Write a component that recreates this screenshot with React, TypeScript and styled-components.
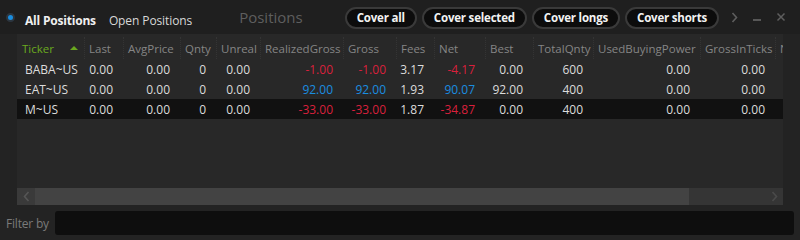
import React from "react";
import styled, { createGlobalStyle } from "styled-components";

const GlobalStyle = createGlobalStyle`
  html, body { margin: 0; padding: 0; background: #232323; }
  body { font-family: "Open Sans", "Noto Sans", sans-serif; }
  * { box-sizing: border-box; }
`;

const COLS = "67px 39px 57px 36px 44px 83px 53px 38px 51px 48px 60px 107px 75px 110px";

const Panel = styled.div`
  width: 800px;
  height: 240px;
  display: flex;
  flex-direction: column;
  background: #232323;
  overflow: hidden;
`;

const TopBar = styled.div`
  height: 34px;
  display: flex;
  align-items: center;
  background: #1f1f1f;
  padding-left: 6px;
  white-space: nowrap;
`;

const Radio = styled.span`
  flex-shrink: 0;
  width: 9px;
  height: 9px;
  border-radius: 50%;
  background: #1a8ee0;
  border: 2px solid #2c3640;
  margin-right: 10px;
  margin-top: 0px;
`;

const Tab = styled.span<{ $active?: boolean }>`
  flex-shrink: 0;
  font-size: 12px;
  font-weight: ${(p) => (p.$active ? 700 : 400)};
  color: ${(p) => (p.$active ? "#f0f0f0" : "#d8d8d8")};
  margin-right: ${(p) => (p.$active ? 13 : 0)}px;
  margin-top: 7px;
  letter-spacing: ${(p) => (p.$active ? "-0.2px" : "-0.1px")};
`;

const Title = styled.span`
  flex-shrink: 0;
  font-size: 15px;
  color: #5e5e5e;
  margin-left: 47px;
  margin-right: 42px;
`;

const Buttons = styled.div`
  display: flex;
  gap: 5px;
  flex-shrink: 0;
  margin-top: 1px;
`;

const PillButton = styled.button`
  flex-shrink: 0;
  white-space: nowrap;
  height: 22px;
  padding: 0 10px;
  border-radius: 11px;
  background: #0c0c0c;
  border: 2px solid #3a3a3a;
  color: #f2f2f2;
  font-family: inherit;
  font-size: 11.5px;
  font-weight: 700;
  letter-spacing: -0.2px;
  line-height: 1;
`;

const WinControls = styled.div`
  flex-shrink: 0;
  display: flex;
  align-items: center;
  gap: 14px;
  margin-left: 12px;
  color: #5e5e5e;
`;

const TableArea = styled.div`
  flex: 1;
  margin: 0 17px;
  background: #282828;
  overflow: hidden;
  padding-top: 3px;
`;

const HeaderRow = styled.div`
  display: grid;
  grid-template-columns: ${COLS};
  height: 22px;
  width: max-content;
`;

const HeadCell = styled.div<{ $first?: boolean; $sorted?: boolean }>`
  position: relative;
  display: flex;
  align-items: center;
  padding-left: ${(p) => (p.$first ? 5 : 4)}px;
  font-size: 11.5px;
  color: ${(p) => (p.$sorted ? "#6aa81f" : "#858585")};
  white-space: nowrap;
  overflow: hidden;
  border-left: ${(p) => (p.$first ? "none" : "1px dotted #343434")};
`;

const SortArrow = styled.span`
  position: absolute;
  right: 6px;
  top: 9px;
  width: 0;
  height: 0;
  border-left: 4px solid transparent;
  border-right: 4px solid transparent;
  border-bottom: 4px solid #6aa81f;
`;

const Row = styled.div<{ $selected?: boolean }>`
  display: grid;
  grid-template-columns: ${COLS};
  height: 20px;
  width: max-content;
  min-width: 100%;
  background: ${(p) => (p.$selected ? "#111111" : "transparent")};
`;

const Cell = styled.div<{ $left?: boolean; $tone?: "red" | "blue" }>`
  display: flex;
  align-items: center;
  justify-content: ${(p) => (p.$left ? "flex-start" : "flex-end")};
  padding: ${(p) => (p.$left ? "0 0 0 8px" : "0 10px 0 0")};
  font-size: 12px;
  color: ${(p) => (p.$tone === "red" ? "#d9203c" : p.$tone === "blue" ? "#1a8ee0" : "#dcdcdc")};
  white-space: nowrap;
`;

const ScrollBar = styled.div`
  height: 17px;
  margin: 0 17px;
  display: flex;
  background: #353535;
`;

const ScrollBtn = styled.div<{ $dim?: boolean }>`
  width: 18px;
  display: flex;
  align-items: center;
  justify-content: center;
  background: ${(p) => (p.$dim ? "transparent" : "#3a3a3a")};
  color: ${(p) => (p.$dim ? "#4a4a4a" : "#555555")};
`;

const Thumb = styled.div`
  width: 654px;
  background: #434343;
`;

const Spacer = styled.div`
  flex: 1;
`;

const FilterRow = styled.div`
  height: 35px;
  display: flex;
  align-items: center;
  padding: 1px 6px 0 6px;
  gap: 6px;
`;

const FilterLabel = styled.span`
  font-size: 12px;
  color: #7a7a7a;
  letter-spacing: -0.2px;
`;

const FilterInput = styled.div`
  flex: 1;
  height: 24px;
  background: #0e0e0e;
  border-radius: 3px;
`;

const Chevron = ({ dir }: { dir: "left" | "right" }) => (
  <svg width="7" height="11" viewBox="0 0 7 11">
    <path
      d={dir === "left" ? "M5.5 1 L1.5 5.5 L5.5 10" : "M1.5 1 L5.5 5.5 L1.5 10"}
      fill="none"
      stroke="currentColor"
      strokeWidth="1.6"
    />
  </svg>
);

const headers = [
  "Ticker",
  "Last",
  "AvgPrice",
  "Qnty",
  "Unreal",
  "RealizedGross",
  "Gross",
  "Fees",
  "Net",
  "Best",
  "TotalQnty",
  "UsedBuyingPower",
  "GrossInTicks",
  "NetInTicks",
];

type Tone = "red" | "blue" | undefined;
type RowData = { cells: string[]; tones: Tone[]; selected?: boolean };

const rows: RowData[] = [
  {
    cells: ["BABA~US", "0.00", "0.00", "0", "0.00", "-1.00", "-1.00", "3.17", "-4.17", "0.00", "600", "0.00", "0.00", ""],
    tones: [, , , , , "red", "red", , "red"],
  },
  {
    cells: ["EAT~US", "0.00", "0.00", "0", "0.00", "92.00", "92.00", "1.93", "90.07", "92.00", "400", "0.00", "0.00", ""],
    tones: [, , , , , "blue", "blue", , "blue"],
  },
  {
    cells: ["M~US", "0.00", "0.00", "0", "0.00", "-33.00", "-33.00", "1.87", "-34.87", "0.00", "400", "0.00", "0.00", ""],
    tones: [, , , , , "red", "red", , "red"],
    selected: true,
  },
];

export default function App() {
  return (
    <>
      <GlobalStyle />
      <Panel>
        <TopBar>
          <Radio />
          <Tab $active>All Positions</Tab>
          <Tab>Open Positions</Tab>
          <Title>Positions</Title>
          <Buttons>
            <PillButton>Cover all</PillButton>
            <PillButton>Cover selected</PillButton>
            <PillButton>Cover longs</PillButton>
            <PillButton>Cover shorts</PillButton>
          </Buttons>
          <WinControls>
            <Chevron dir="right" />
            <svg width="10" height="10" viewBox="0 0 10 10">
              <path d="M1 8 H9" stroke="currentColor" strokeWidth="1.8" />
            </svg>
            <svg width="10" height="10" viewBox="0 0 10 10">
              <path d="M1.5 1.5 L8.5 8.5 M8.5 1.5 L1.5 8.5" stroke="currentColor" strokeWidth="1.5" />
            </svg>
          </WinControls>
        </TopBar>
        <TableArea>
          <HeaderRow>
            {headers.map((h, i) => (
              <HeadCell key={h} $first={i === 0} $sorted={i === 0}>
                {h}
                {i === 0 && <SortArrow />}
              </HeadCell>
            ))}
          </HeaderRow>
          {rows.map((r) => (
            <Row key={r.cells[0]} $selected={r.selected}>
              {r.cells.map((c, i) => (
                <Cell key={i} $left={i === 0} $tone={r.tones[i]}>
                  {c}
                </Cell>
              ))}
            </Row>
          ))}
        </TableArea>
        <ScrollBar>
          <ScrollBtn>
            <Chevron dir="left" />
          </ScrollBtn>
          <Thumb />
          <Spacer />
          <ScrollBtn $dim>
            <Chevron dir="right" />
          </ScrollBtn>
        </ScrollBar>
        <FilterRow>
          <FilterLabel>Filter by</FilterLabel>
          <FilterInput />
        </FilterRow>
      </Panel>
    </>
  );
}
